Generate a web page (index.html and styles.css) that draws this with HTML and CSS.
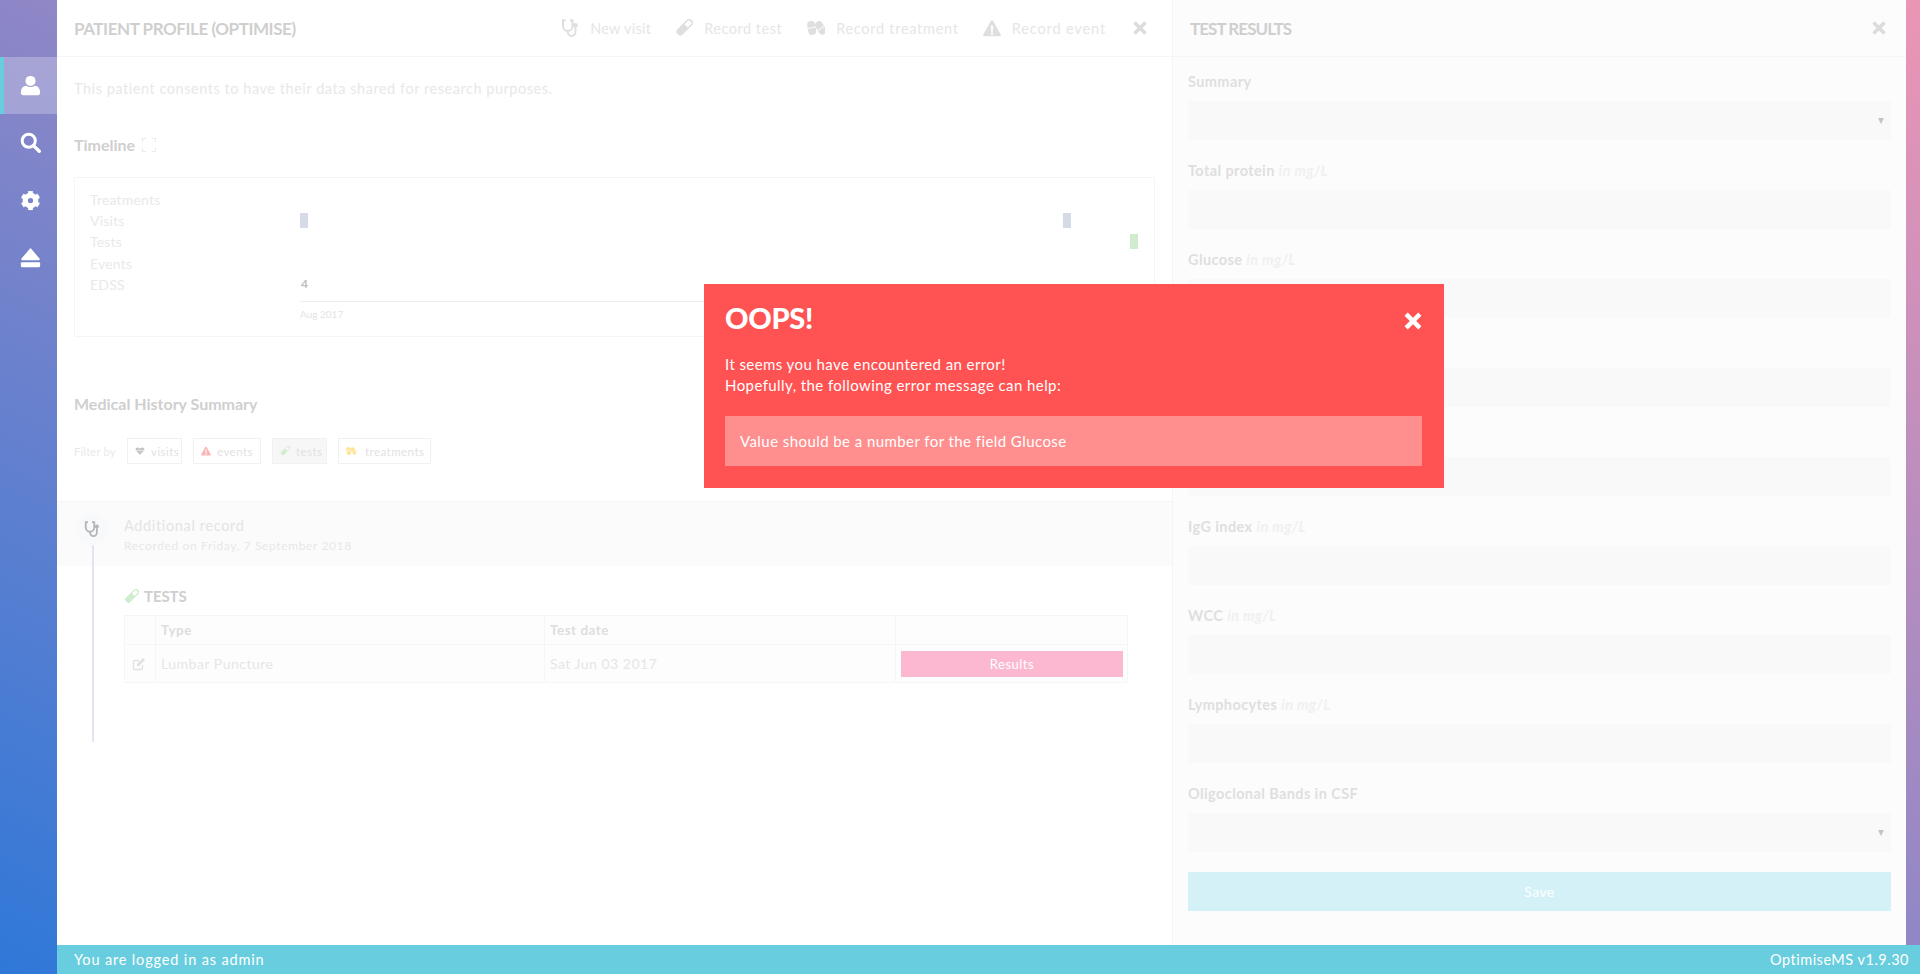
FILE: index.html
```html
<!DOCTYPE html>
<html lang="en">
<head>
<meta charset="utf-8">
<title>OptimiseMS</title>
<link rel="stylesheet" href="styles.css">
</head>
<body>
<svg class="defs" width="0" height="0" aria-hidden="true">
  <symbol id="i-steth" viewBox="0 0 20 20"><path d="M5 1.500H2.200v6.500a5.300 5.300 0 0 0 10.600 0V1.500H10" fill="none" stroke="currentColor" stroke-width="2.300"/><path d="M7.500 13.500v1a4.300 4.300 0 0 0 8.600 0V9" fill="none" stroke="currentColor" stroke-width="2.200"/><circle cx="16.100" cy="7" r="2.500" fill="currentColor"/></symbol>
  <symbol id="i-tube" viewBox="0 0 24 24"><g transform="rotate(45 12 12)"><path d="M6.500 -1.500h11" stroke="currentColor" stroke-width="2.600" fill="none"/><path d="M8 -1v20a4 4 0 0 0 8 0V-1" fill="none" stroke="currentColor" stroke-width="2"/><path d="M8 8h8v11a4 4 0 0 1-8 0z" fill="currentColor"/></g></symbol>
  <symbol id="i-pills" viewBox="0 0 24 19"><g fill="currentColor"><rect x="1" y="0" width="10.500" height="19" rx="5.200" transform="rotate(-10 6 9.500)"/><rect x="13" y="0" width="10.500" height="19" rx="5.200" transform="rotate(-32 18 9.500)"/></g><path d="M1 10l11-2M12.500 14l11-7" stroke="#fff" stroke-width="1.300"/></symbol>
  <symbol id="i-warn" viewBox="0 0 24 22"><path fill-rule="evenodd" fill="currentColor" d="M12 0.500c.7 0 1.300.4 1.600 1l10 18c.6 1.100-.2 2.500-1.600 2.500H2c-1.400 0-2.200-1.400-1.600-2.500l10-18c.3-.6.9-1 1.600-1zM10.400 7.500l.4 8h2.400l.4-8zM10.500 17v3h3v-3z"/></symbol>
  <symbol id="i-x" viewBox="0 0 16 16"><path d="M2.500 2.500l11 11M13.500 2.500l-11 11" stroke="currentColor" stroke-width="3.600" fill="none"/></symbol>
</svg>
<div class="app">
  <nav class="sidebar">
    <a class="nav-item active"><svg class="nav-icon" viewBox="0 0 24 24"><circle cx="12" cy="6.800" r="5.800" fill="#fff"/><path d="M1 20.500c0-5 2-7.800 6-8.300 1.400 1 3.200 1.500 5 1.500s3.600-.5 5-1.500c4 .5 6 3.300 6 8.300 0 1.600-1.200 2.500-2.600 2.500H3.600C2.200 23 1 22.100 1 20.500z" fill="#fff"/></svg></a>
    <a class="nav-item"><svg class="nav-icon" viewBox="0 0 24 24"><circle cx="10" cy="10" r="7.500" fill="none" stroke="#fff" stroke-width="3.400"/><path d="M15.500 15.500l6.500 6.500" stroke="#fff" stroke-width="3.800" stroke-linecap="round"/></svg></a>
    <a class="nav-item"><svg class="nav-icon" viewBox="0 0 24 24"><circle cx="12" cy="12" r="6" fill="none" stroke="#fff" stroke-width="6"/><circle cx="12" cy="12" r="9.300" fill="none" stroke="#fff" stroke-width="3.400" pathLength="60" stroke-dasharray="5.500 4.500" stroke-dashoffset="-2.250"/></svg></a>
    <a class="nav-item"><svg class="nav-icon" viewBox="0 0 24 24"><path d="M12 1L22.500 13.500c.4.600 0 1.500-.7 1.500H2.200c-.7 0-1.100-.9-.7-1.500z" fill="#fff"/><rect x="1" y="17.500" width="22" height="5.500" rx="1.200" fill="#fff"/></svg></a>
  </nav>
  <div class="stage">
    <div class="workspace">
      <main class="profile">
        <header class="panel-head">
          <h1 class="panel-title">PATIENT PROFILE (OPTIMISE)</h1>
          <div class="actions">
            <a class="action a-visit"><svg class="act-icon"><use href="#i-steth"/></svg>New visit</a>
            <a class="action a-test"><svg class="act-icon"><use href="#i-tube"/></svg>Record test</a>
            <a class="action a-treat"><svg class="act-icon"><use href="#i-pills"/></svg>Record treatment</a>
            <a class="action a-event"><svg class="act-icon"><use href="#i-warn"/></svg>Record event</a>
            <svg class="close-x"><use href="#i-x"/></svg>
          </div>
        </header>
        <p class="consent">This patient consents to have their data shared for research purposes.</p>
        <h2 class="section-title timeline-title">Timeline
          <svg class="expand" viewBox="0 0 14 14"><path d="M0 4V0h4M10 0h4v4M14 10v4h-4M4 14H0v-4" fill="none" stroke="#ebebeb" stroke-width="2"/></svg>
        </h2>
        <section class="timeline">
          <div class="tl-row"><span class="tl-label">Treatments</span><div class="tl-track"></div></div>
          <div class="tl-row"><span class="tl-label">Visits</span><div class="tl-track"><i class="bar visit b1"></i><i class="bar visit b2"></i></div></div>
          <div class="tl-row"><span class="tl-label">Tests</span><div class="tl-track"><i class="bar test b3"></i></div></div>
          <div class="tl-row"><span class="tl-label">Events</span><div class="tl-track"></div></div>
          <div class="tl-row"><span class="tl-label">EDSS</span><div class="tl-track"><b class="edss">4</b></div></div>
          <div class="tl-axis"><span>Aug 2017</span></div>
        </section>
        <h2 class="section-title history-title">Medical History Summary</h2>
        <div class="filters">
          <span class="filter-label">Filter by</span>
          <span class="chip c-visits"><svg class="chip-icon heart" viewBox="0 0 24 20"><path d="M12 19L2.500 9.500C-1.500 4.500 5.500-2 12 4c6.500-6 13.500.5 9.500 5.500z" fill="#c4c4c4"/><path d="M2 9h6l2-3 3 5 2-2h7" stroke="#fff" stroke-width="1.500" fill="none"/></svg>visits</span>
          <span class="chip c-events"><svg class="chip-icon warn"><use href="#i-warn"/></svg>events</span>
          <span class="chip c-tests on"><svg class="chip-icon tube"><use href="#i-tube"/></svg>tests</span>
          <span class="chip c-treat"><svg class="chip-icon pills"><use href="#i-pills"/></svg>treatments</span>
        </div>
        <section class="record-head">
          <span class="rec-badge"><svg class="rec-icon"><use href="#i-steth"/></svg></span>
          <div>
            <div class="rec-title">Additional record</div>
            <div class="rec-date">Recorded on Friday, 7 September 2018</div>
          </div>
        </section>
        <section class="record-body">
          <h3 class="tests-title"><svg class="tests-icon"><use href="#i-tube"/></svg>TESTS</h3>
          <div class="table">
            <div class="cell hd"></div>
            <div class="cell hd strong">Type</div>
            <div class="cell hd strong">Test date</div>
            <div class="cell hd last"></div>
            <div class="cell"><svg class="edit" viewBox="0 0 14 14"><path d="M10.500 8v3.500a1 1 0 0 1-1 1h-7a1 1 0 0 1-1-1v-7a1 1 0 0 1 1-1H7" fill="none" stroke="#e2e2e2" stroke-width="1.300"/><path d="M5 7l6-6 2 2-6 6H5z" fill="#e2e2e2"/></svg></div>
            <div class="cell">Lumbar Puncture</div>
            <div class="cell">Sat Jun 03 2017</div>
            <div class="cell last"><a class="results">Results</a></div>
          </div>
        </section>
      </main>
      <aside class="results-panel">
        <header class="panel-head side-head">
          <h2 class="panel-title small">TEST RESULTS</h2>
          <svg class="close-x"><use href="#i-x"/></svg>
        </header>
        <form class="form">
          <div class="field"><label class="lbl">Summary</label><div class="ctl select"></div></div>
          <div class="field"><label class="lbl">Total protein <em>in mg/L</em></label><div class="ctl"></div></div>
          <div class="field"><label class="lbl">Glucose <em>in mg/L</em></label><div class="ctl"></div></div>
          <div class="field"><label class="lbl">Albumin <em>in mg/L</em></label><div class="ctl"></div></div>
          <div class="field"><label class="lbl">IgG <em>in mg/L</em></label><div class="ctl"></div></div>
          <div class="field"><label class="lbl">IgG index <em>in mg/L</em></label><div class="ctl"></div></div>
          <div class="field"><label class="lbl">WCC <em>in mg/L</em></label><div class="ctl"></div></div>
          <div class="field"><label class="lbl">Lymphocytes <em>in mg/L</em></label><div class="ctl"></div></div>
          <div class="field"><label class="lbl">Oligoclonal Bands in CSF</label><div class="ctl select"></div></div>
          <div class="save">Save</div>
        </form>
      </aside>
    </div>
    <footer class="footer"><span class="who">You are logged in as admin</span><span class="version">OptimiseMS v1.9.30</span></footer>
  </div>
</div>
<div class="modal" role="alertdialog">
  <div class="modal-head">
    <h2 class="modal-title">OOPS!</h2>
    <svg class="modal-x"><use href="#i-x"/></svg>
  </div>
  <p class="modal-text">It seems you have encountered an error!<br>Hopefully, the following error message can help:</p>
  <div class="modal-msg">Value should be a number for the field Glucose</div>
</div>
</body>
</html>
```
FILE: styles.css
```css
* { box-sizing: border-box; }
html, body { margin: 0; height: 100%; overflow: hidden; }
body {
  font-family: "Lato", "Liberation Sans", sans-serif;
  background: linear-gradient(to top right, #2f78d8, #ec95b5);
  color: #e8e8e8;
}
.defs { position: absolute; }
h1, h2, h3, p { margin: 0; }

.app { display: flex; height: 974px; }
.sidebar { width: 57px; flex: none; padding-top: 57px; display: flex; flex-direction: column; }
.nav-item { height: 57.500px; display: flex; align-items: center; justify-content: center; padding-left: 4px; }
.nav-item.active { height: 57px; background: rgba(255,255,255,.25); border-left: 4px solid #68cdde; padding-left: 0; }
.nav-icon { width: 21px; height: 21px; }

.stage { flex: 1; display: flex; flex-direction: column; min-width: 0; }
.workspace { flex: 1; display: flex; min-height: 0; margin-right: 14px; background: #fff; }
.profile { width: 1116px; flex: none; background: #fff; border-right: 1px solid #f5f5f5; }
.results-panel { flex: 1; background: #fcfcfc; min-width: 0; }

.panel-head { height: 57px; display: flex; align-items: center; justify-content: space-between; padding: 0 24px 0 17px; border-bottom: 1px solid #f5f5f5; }
.side-head { padding: 0 19px 0 17px; }
.panel-title { font-size: 17px; font-weight: 700; color: #cfcfcf; letter-spacing: -.45px; }
.panel-title.small { letter-spacing: -.95px; }
.actions { display: flex; align-items: center; }
.action { display: flex; align-items: center; font-size: 14.500px; color: #e6e6e6; letter-spacing: .72px; }
.act-icon { width: 18px; height: 18px; color: #dfdfdf; margin-right: 11px; }
.a-visit { margin-right: 24px; letter-spacing: .25px; }
.a-test { margin-right: 25px; letter-spacing: .5px; }
.a-treat { margin-right: 24px; }
.a-event { margin-right: 26px; letter-spacing: .88px; }
.close-x { width: 16px; height: 16px; color: #dcdcdc; }

.consent { font-size: 14.500px; letter-spacing: .54px; padding: 23px 0 0 17px; line-height: 18px; }
.section-title { font-size: 16px; font-weight: 700; color: #cfcfcf; padding-left: 17px; line-height: 20px; }
.timeline-title { margin-top: 37px; display: flex; align-items: center; gap: 7px; }
.expand { width: 14px; height: 14px; }

.timeline { margin: 22px 17px 0; border: 1px solid #f5f5f5; height: 160px; padding-top: 11px; }
.tl-row { display: flex; height: 21.200px; align-items: center; font-size: 14px; letter-spacing: .2px; color: #e9e9e9; }
.tl-label { width: 225px; padding-left: 15px; flex: none; }
.tl-track { position: relative; flex: 1; height: 100%; }
.bar { position: absolute; top: 3px; width: 8px; height: 15px; }
.visit { background: #d5dbe6; }
.test { background: #cfeccf; }
.b1 { left: 0; }
.b2 { left: 763px; }
.b3 { left: 830px; }
.edss { font-size: 12px; color: #bdbdbd; padding-left: 1px; }
.tl-axis { margin: 6px 15px 0 225px; border-top: 1px solid #ededed; padding-top: 6px; font-size: 10px; color: #e4e4e4; }

.history-title { margin-top: 57px; }
.filters { display: flex; align-items: center; margin: 24px 0 0 17px; font-size: 11.500px; letter-spacing: .45px; }
.filter-label { width: 53px; color: #e9e9e9; font-size: 11px; letter-spacing: .25px; }
.chip { height: 26px; display: flex; align-items: center; border: 1px solid #f1f1f1; padding: 0 7px; color: #e2e2e2; margin-right: 11px; }
.chip.on { background: #f7f7f7; }
.chip-icon { width: 10px; height: 10px; margin-right: 6px; flex: none; }
.warn { color: #fdb4b4; }
.tube { color: #cfeccf; }
.pills { color: #ffe598; margin-right: 9px; }
.c-visits { width: 55px; }
.c-events { width: 68px; }
.c-tests { width: 55px; }
.c-treat { width: 93px; }

.record-head { position: relative; margin-top: 37px; height: 65px; background: #fbfbfb; border-top: 1px solid #f5f5f5; display: flex; align-items: flex-start; padding: 11px 0 0 19px; }
.record-head::after { content: ""; position: absolute; left: 35px; top: 43px; bottom: 0; width: 2px; background: #e1e6ee; }
.rec-badge { width: 32px; height: 32px; border-radius: 50%; background: #f8f9fb; display: flex; align-items: center; justify-content: center; margin-right: 16px; }
.rec-icon { width: 16px; height: 16px; color: #b5b5b5; }
.rec-title { font-size: 14.500px; letter-spacing: .65px; color: #e4e4e4; line-height: 18px; margin-top: 4px; }
.rec-date { font-size: 12px; letter-spacing: .63px; color: #e8e8e8; margin-top: 3px; }

.record-body { margin-left: 35px; height: 176px; border-left: 2px solid #e1e6ee; padding: 21px 35px 0 30px; }
.tests-title { display: flex; align-items: center; font-size: 15px; color: #cfcfcf; font-weight: 700; letter-spacing: -.1px; line-height: 18px; }
.tests-icon { width: 15px; height: 15px; color: #cfeccf; margin-right: 5px; }
.table { display: grid; grid-template-columns: 31px 389px 351px 233px; grid-template-rows: 29px 37px; margin-top: 10px; background: #fdfdfd; border: 1px solid #f6f6f6; width: 1004px; font-size: 14px; color: #e6e6e6; letter-spacing: .5px; }
.cell { border-right: 1px solid #f6f6f6; padding: 0 0 0 5px; display: flex; align-items: center; }
.cell.hd { border-bottom: 1px solid #f6f6f6; }
.cell.last { border-right: 0; padding: 0 6px 0 5px; }
.strong { font-weight: 700; color: #dedede; font-size: 13.500px; }
.edit { width: 14px; height: 14px; margin-left: 2px; }
.results { display: flex; flex: 1; height: 26px; align-items: center; justify-content: center; background: #fbb8d0; color: #fff; font-size: 13px; }

.form { padding: 0 15px; }
.field { height: 89px; padding-top: 16px; }
.lbl { display: block; font-size: 14.500px; font-weight: 700; color: #dfdfdf; line-height: 18px; margin-bottom: 10px; letter-spacing: .4px; }
.lbl em { color: #f0f0f0; }
.ctl { height: 39px; background: #f9f9f9; position: relative; }
.select::after { content: ""; position: absolute; right: 7px; top: 17px; border: 3px solid transparent; border-top: 6px solid #c4c4c4; border-bottom: 0; }
.save { margin-top: 14px; height: 39px; background: #d3f1f7; color: #fff; font-size: 14px; letter-spacing: .4px; display: flex; align-items: center; justify-content: center; }

.footer { height: 29px; flex: none; background: #68cdde; color: #fff; font-size: 14.500px; display: flex; align-items: center; justify-content: space-between; padding: 0 11px 0 17px; }
.who { letter-spacing: .85px; }
.version { letter-spacing: .5px; }

.modal { position: absolute; left: 704px; top: 284px; width: 740px; height: 204px; background: #ff5252; color: #fff; padding: 0 22px 0 21px; }
.modal-head { display: flex; justify-content: space-between; align-items: center; height: 69px; }
.modal-title { font-size: 29px; font-weight: 900; letter-spacing: -.3px; line-height: 68px; margin-top: -2px; }
.modal-x { width: 20px; height: 20px; color: #fff; margin: 4px -1px 0 0; }
.modal-text { font-size: 15px; line-height: 21px; letter-spacing: .42px; margin-top: 1px; }
.modal-msg { margin-top: 20px; height: 50px; background: #ff8e8e; display: flex; align-items: center; padding-left: 15px; padding-bottom: 1px; font-size: 15px; letter-spacing: .43px; }
```
